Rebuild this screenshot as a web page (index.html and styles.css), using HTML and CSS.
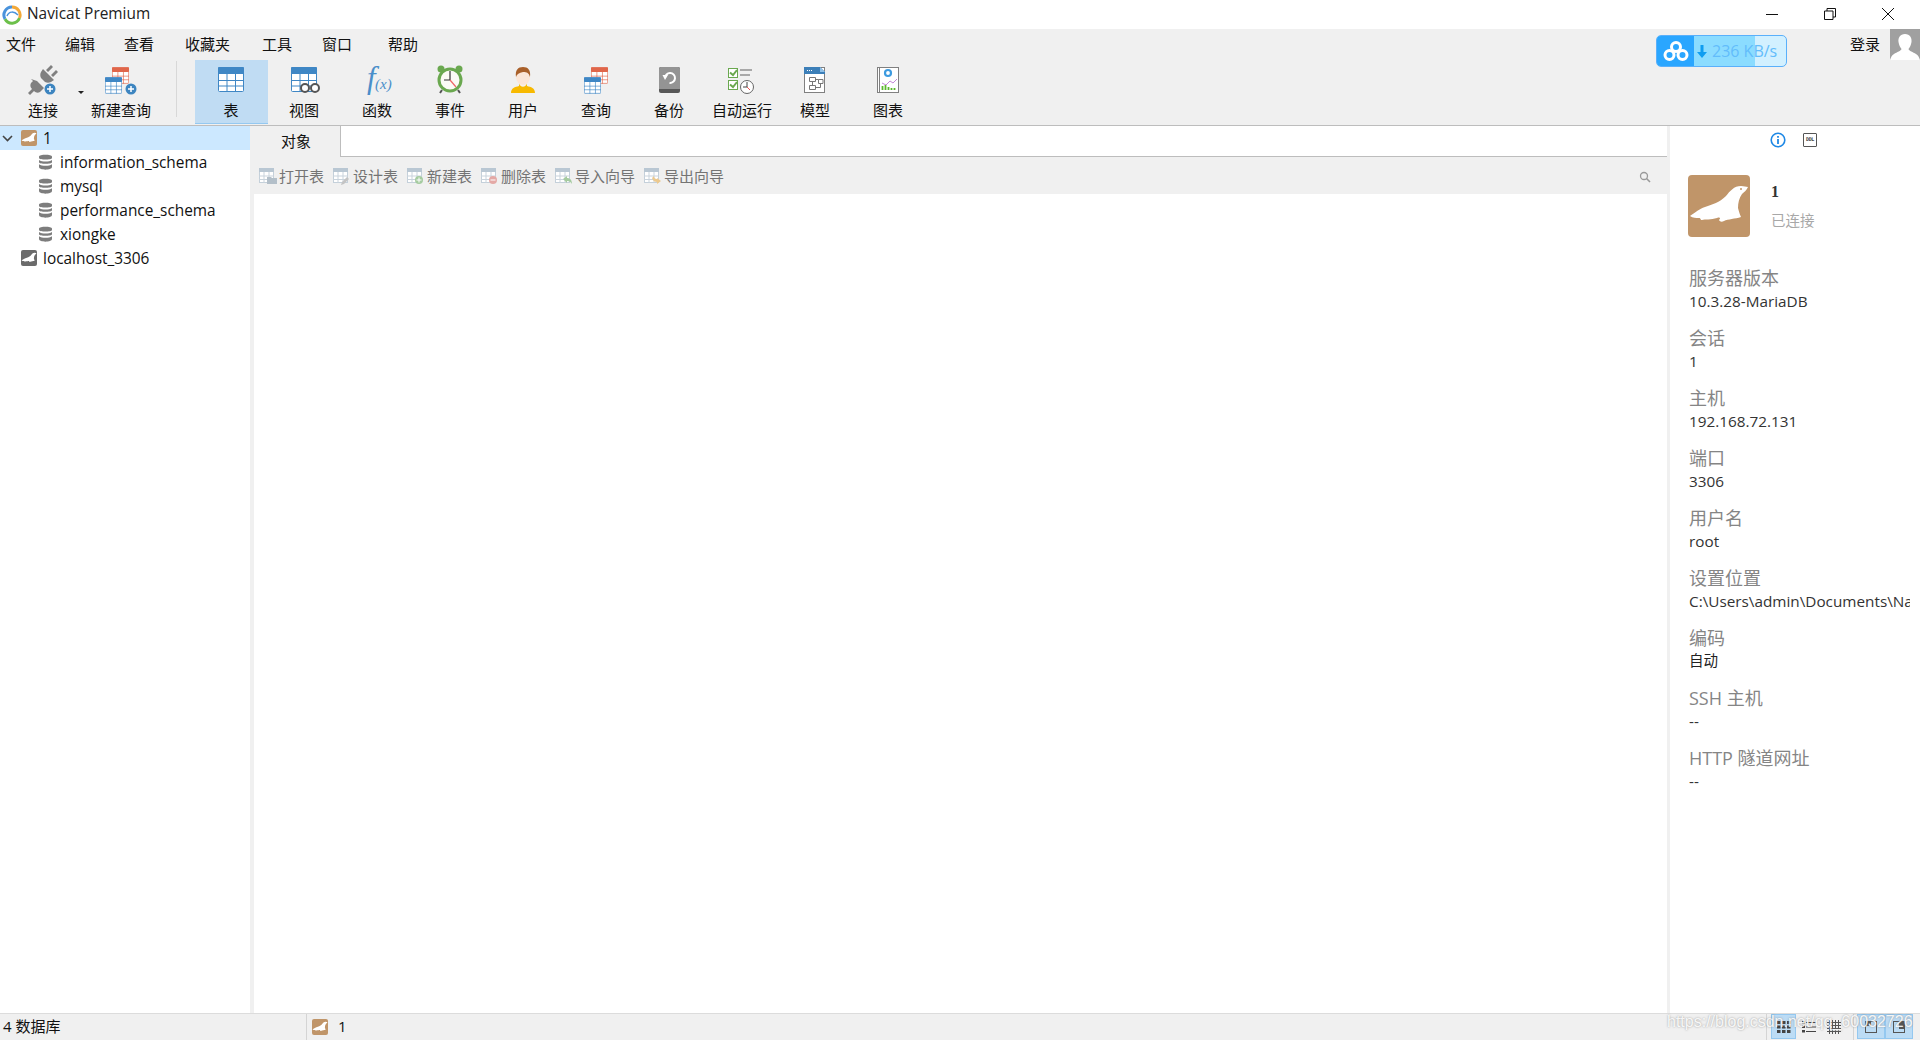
FILE: index.html
```html
<!DOCTYPE html>
<html lang="zh">
<head>
<meta charset="utf-8">
<title>Navicat Premium</title>
<link rel="stylesheet" href="styles.css">
</head>
<body>
<svg class="sprite" xmlns="http://www.w3.org/2000/svg">
  <defs>
    <symbol id="grid" viewBox="0 0 26 25">
      <rect x="0.5" y="0.5" width="25" height="24" rx="1" fill="#fff" stroke="currentColor"/>
      <rect x="0" y="0" width="26" height="7" rx="1" fill="currentColor"/>
      <path d="M0 13.5H26M0 19H26M9 7V25M17.5 7V25" stroke="currentColor" fill="none"/>
    </symbol>
    <symbol id="seal" viewBox="0 0 62 62">
      <path d="M2 41C8 37 11 34 17 32C25 29 31 28 38 21C42 16 46 11 53 11C56 11 58 12 60 12C59 15 56 17 54 19C51 23 50 28 50 33C51 37 52 40 53 42C47 44 40 44 36 46C34 47 32 47 31 45C33 43 32 42 29 43C23 45 17 44 14 45C12 45 13 43 11 43C8 43 5 43 2 41Z" fill="#fff"/>
    </symbol>
    <symbol id="mini" viewBox="0 0 15 15">
      <rect x="0.5" y="0.5" width="14" height="14" fill="#fff" stroke="#c4d0da"/>
      <rect x="0" y="0" width="15" height="4" fill="#b9c7d3"/>
      <path d="M0 8H15M0 11.5H15M5 4V15M10 4V15" stroke="#c9d3dc" fill="none"/>
    </symbol>
    <symbol id="db" viewBox="0 0 15 16">
      <path d="M1 2.5C1 0 14 0 14 2.5V4C14 6 1 6 1 4ZM1 6C4 8 11 8 14 6V8.2C14 10.2 1 10.2 1 8.2ZM1 10.2C4 12.2 11 12.2 14 10.2V13C14 16.5 1 16.5 1 13Z" fill="#7d7d7d"/>
    </symbol>
  </defs>
</svg>

<div class="app">
  <header class="titlebar">
    <svg class="app-logo" width="20" height="20" viewBox="0 0 20 20">
      <path d="M10 2A8 8 0 0 1 17.500 13" fill="none" stroke="#f3a93a" stroke-width="3"/>
      <path d="M17.500 13A8 8 0 0 1 3 14" fill="none" stroke="#6cc04a" stroke-width="3"/>
      <path d="M3 14A8 8 0 0 1 10 2" fill="none" stroke="#4a93dc" stroke-width="3"/>
      <path d="M5 11C7 6 12 6 16 10" fill="none" stroke="#4a93dc" stroke-width="1.500"/>
    </svg>
    <span class="app-name">Navicat Premium</span>
    <div class="win-controls">
      <svg class="win-btn" width="12" height="12" viewBox="0 0 12 12"><path d="M0 6.5H12" stroke="#111"/></svg>
      <svg class="win-btn" width="12" height="12" viewBox="0 0 12 12"><path d="M0.5 3H9V11.5H0.5ZM3 3V0.5H11.5V9H9" fill="none" stroke="#111"/></svg>
      <svg class="win-btn" width="12" height="12" viewBox="0 0 12 12"><path d="M0 0L12 12M12 0L0 12" stroke="#111"/></svg>
    </div>
  </header>

  <nav class="menubar">
    <span class="menu m1">文件</span>
    <span class="menu m2">编辑</span>
    <span class="menu m3">查看</span>
    <span class="menu m4">收藏夹</span>
    <span class="menu m5">工具</span>
    <span class="menu m6">窗口</span>
    <span class="menu m7">帮助</span>
    <div class="speed">
      <span class="speed-icon">
        <svg width="26" height="22" viewBox="0 0 26 22"><g fill="none" stroke="#fff" stroke-width="3"><circle cx="13" cy="7" r="4.5"/><circle cx="6.5" cy="15" r="4.5"/><circle cx="19.5" cy="15" r="4.5"/></g></svg>
      </span>
      <span class="speed-val">
        <svg class="speed-arrow" width="10" height="13" viewBox="0 0 10 13"><path d="M3.500 0H6.500V7H10L5 13L0 7H3.500Z" fill="#0f9df0"/></svg>
        236 KB/s
      </span>
    </div>
    <span class="menu login">登录</span>
    <span class="avatar">
      <svg width="30" height="31" viewBox="0 0 30 31"><path d="M15 5C20 5 22 9 21.500 13C21 16 20 18 18.500 20C19 22 23 23 26 25C28 26 29 28 30 31H0C1 28 2 26 4 25C7 23 11 22 11.500 20C10 18 9 16 8.500 13C8 9 10 5 15 5Z" fill="#fff"/></svg>
    </span>
  </nav>

  <div class="toolbar">
    <div class="tool tool-first">
      <svg class="tool-icon" viewBox="0 0 36 36">
        <g fill="#808080">
          <path d="M12 19L19 26L15 30C13 31 11 31 9 29L5 33L3 31L7 27C5 25 5 23 6 21L8 19L6 17"/>
          <path d="M18 7L29 18L26 20C24 21 22 21 20 20L16 16C15 14 15 12 16 10Z"/>
          <path d="M21 8L26 3L28 5L23 10ZM26 13L31 8L33 10L28 15Z"/>
        </g>
        <circle cx="25" cy="27" r="5.500" fill="#3d85c0"/>
        <path d="M22 27H28M25 24V30" stroke="#fff" stroke-width="1.500"/>
      </svg>
      <span class="tool-label">连接</span>
      <span class="caret"></span>
    </div>
    <div class="tool tool-second">
      <svg class="tool-icon" viewBox="0 0 36 36">
        <use href="#grid" x="9" y="5" width="17" height="17" class="c-red"/>
        <use href="#grid" x="2" y="15" width="17" height="17" class="c-blue"/>
        <circle cx="28" cy="27" r="5.500" fill="#3d85c0"/>
        <path d="M25 27H31M28 24V30" stroke="#fff" stroke-width="1.500"/>
      </svg>
      <span class="tool-label">新建查询</span>
    </div>
    <span class="tool-sep"></span>
    <div class="tool is-active">
      <svg class="tool-icon" viewBox="0 0 36 36"><use href="#grid" x="5" y="5" width="26" height="25" class="c-blue"/></svg>
      <span class="tool-label">表</span>
    </div>
    <div class="tool">
      <svg class="tool-icon" viewBox="0 0 36 36">
        <use href="#grid" x="5" y="5" width="26" height="25" class="c-blue"/>
        <circle cx="19" cy="26" r="4" fill="#fff" stroke="#555" stroke-width="2"/>
        <circle cx="29" cy="26" r="4" fill="#fff" stroke="#555" stroke-width="2"/>
      </svg>
      <span class="tool-label">视图</span>
    </div>
    <div class="tool">
      <svg class="tool-icon fx" viewBox="0 0 36 36">
        <text x="8" y="26" class="fx-f">f</text>
        <text x="16" y="27" class="fx-x">(x)</text>
      </svg>
      <span class="tool-label">函数</span>
    </div>
    <div class="tool">
      <svg class="tool-icon" viewBox="0 0 36 36">
        <circle cx="9" cy="7" r="3.500" fill="#6aa84f"/><circle cx="27" cy="7" r="3.500" fill="#6aa84f"/>
        <path d="M10 28L8 31M26 28L28 31" stroke="#555" stroke-width="2"/>
        <circle cx="18" cy="18" r="11" fill="#fbfbf5" stroke="#6aa84f" stroke-width="3"/>
        <path d="M18 18V9M18 18H12" stroke="#333" stroke-width="1.200"/>
        <path d="M18 18L24 25" stroke="#e66" stroke-width="1.200"/>
      </svg>
      <span class="tool-label">事件</span>
    </div>
    <div class="tool">
      <svg class="tool-icon" viewBox="0 0 36 36">
        <path d="M6 31C6 26 10 25 14 24V20H22V24C26 25 30 26 30 31Z" fill="#f7b900"/>
        <path d="M14 21C15 26 21 26 22 21L24 14H12Z" fill="#f6f0ea"/>
        <ellipse cx="18" cy="15" rx="7" ry="8" fill="#fbe5d6"/>
        <path d="M11 15C10 8 13 5 18 5C23 5 26 8 25 15C24 11 22 10 18 10C14 11 12 12 11 15Z" fill="#a9602a"/>
      </svg>
      <span class="tool-label">用户</span>
    </div>
    <div class="tool">
      <svg class="tool-icon" viewBox="0 0 36 36">
        <use href="#grid" x="13" y="5" width="17" height="17" class="c-red"/>
        <use href="#grid" x="6" y="15" width="17" height="17" class="c-blue"/>
      </svg>
      <span class="tool-label">查询</span>
    </div>
    <div class="tool">
      <svg class="tool-icon" viewBox="0 0 36 36">
        <rect x="8" y="5" width="21" height="26" rx="2" fill="#585858"/>
        <path d="M8 7A2 2 0 0 1 10 5H27A2 2 0 0 1 29 7V27H8Z" fill="#949494"/>
        <path d="M14 16A5 5 0 1 1 18.500 21" fill="none" stroke="#fff" stroke-width="2"/>
        <path d="M11.500 13H17L14 18Z" fill="#fff"/>
      </svg>
      <span class="tool-label">备份</span>
    </div>
    <div class="tool">
      <svg class="tool-icon" viewBox="0 0 36 36">
        <rect x="4.500" y="6.500" width="9" height="9" fill="#fff" stroke="#6aa84f"/>
        <rect x="4.500" y="18.500" width="9" height="9" fill="#fff" stroke="#6aa84f"/>
        <path d="M6 10.500L9 13L13 8M6 22.500L9 25L13 20" fill="none" stroke="#6aa84f" stroke-width="2"/>
        <path d="M16 8H28M16 13H26" stroke="#a8a8a8" stroke-width="2"/>
        <circle cx="23" cy="25" r="6.500" fill="#fff" stroke="#666"/>
        <path d="M23 25V20M23 25H19" stroke="#444"/>
        <path d="M23 25L26 28" stroke="#e55"/>
      </svg>
      <span class="tool-label">自动运行</span>
    </div>
    <div class="tool">
      <svg class="tool-icon" viewBox="0 0 36 36">
        <rect x="7.500" y="5.500" width="20" height="25" fill="#fff" stroke="#808080"/>
        <path d="M7 5H23L28 10V12H7Z" fill="#3c7fb8"/>
        <path d="M23 5L28 10H23Z" fill="#8ec0e8"/>
        <path d="M10 8.500H15" stroke="#fff" stroke-dasharray="1 1"/>
        <path d="M12.500 15.500H18.500V19.500H12.500ZM21.500 17.500H26V21.500H21.500ZM12.500 23.500H18.500V27.500H12.500ZM15.500 19.500V23.500M18.500 17.500H21.500M18.500 25.500H23.500V21.500" fill="none" stroke="#777"/>
      </svg>
      <span class="tool-label">模型</span>
    </div>
    <div class="tool">
      <svg class="tool-icon" viewBox="0 0 36 36">
        <rect x="7.500" y="5.500" width="21" height="25" fill="#fff" stroke="#808080"/>
        <path d="M9.500 5.500V30.500" stroke="#808080"/>
        <circle cx="18" cy="11" r="3" fill="none" stroke="#3d9be0" stroke-width="2.200"/>
        <path d="M12 21L16 23L20 19L23 21L27 17" fill="none" stroke="#c586d8"/>
        <path d="M12.500 28V24M15.500 28V23M18.500 28V25M21.500 28V26M24.500 28V26" stroke="#5cb82d" stroke-width="1.800"/>
      </svg>
      <span class="tool-label">图表</span>
    </div>
  </div>

  <main class="workspace">
    <aside class="sidebar">
      <div class="tree-row is-selected">
        <svg class="chevron" width="11" height="7" viewBox="0 0 11 7"><path d="M1 1L5.500 5.500L10 1" fill="none" stroke="#444" stroke-width="1.600"/></svg>
        <svg class="conn-icon tan" width="16" height="16" viewBox="0 0 62 62"><use href="#seal"/></svg>
        <span class="tree-text">1</span>
      </div>
      <div class="tree-row child"><svg class="db-icon" width="15" height="16"><use href="#db"/></svg><span class="tree-text">information_schema</span></div>
      <div class="tree-row child"><svg class="db-icon" width="15" height="16"><use href="#db"/></svg><span class="tree-text">mysql</span></div>
      <div class="tree-row child"><svg class="db-icon" width="15" height="16"><use href="#db"/></svg><span class="tree-text">performance_schema</span></div>
      <div class="tree-row child"><svg class="db-icon" width="15" height="16"><use href="#db"/></svg><span class="tree-text">xiongke</span></div>
      <div class="tree-row top"><svg class="conn-icon dark" width="16" height="16" viewBox="0 0 62 62"><use href="#seal"/></svg><span class="tree-text">localhost_3306</span></div>
    </aside>

    <section class="center">
      <div class="tabs">
        <span class="tab">对象</span>
        <span class="tab-rest"></span>
      </div>
      <div class="obj-bar">
        <span class="obj-btn"><span class="mini-wrap"><svg width="15" height="15"><use href="#mini"/></svg><svg class="badge" width="10" height="8" viewBox="0 0 10 8"><path d="M0 1H4L5 2H10V8H0Z" fill="#b3bfc9"/></svg></span>打开表</span>
        <span class="obj-btn"><span class="mini-wrap"><svg width="15" height="15"><use href="#mini"/></svg><svg class="badge" width="9" height="9" viewBox="0 0 9 9"><path d="M0 9L1 6L6 1L8 3L3 8Z" fill="#c4c4c4"/></svg></span>设计表</span>
        <span class="obj-btn"><span class="mini-wrap"><svg width="15" height="15"><use href="#mini"/></svg><svg class="badge" width="8" height="8" viewBox="0 0 8 8"><circle cx="4" cy="4" r="4" fill="#a5cba0"/><path d="M1.500 4H6.500M4 1.500V6.500" stroke="#fff"/></svg></span>新建表</span>
        <span class="obj-btn"><span class="mini-wrap"><svg width="15" height="15"><use href="#mini"/></svg><svg class="badge" width="8" height="8" viewBox="0 0 8 8"><circle cx="4" cy="4" r="4" fill="#e4a9a6"/><path d="M1.500 4H6.500" stroke="#fff"/></svg></span>删除表</span>
        <span class="obj-btn"><span class="mini-wrap"><svg width="15" height="15"><use href="#mini"/></svg><svg class="badge" width="9" height="8" viewBox="0 0 9 8"><path d="M0 3L4 0V2C7 2 9 4 9 8C8 6 6 5 4 5V7Z" fill="#a5cba0"/></svg></span>导入向导</span>
        <span class="obj-btn"><span class="mini-wrap"><svg width="15" height="15"><use href="#mini"/></svg><svg class="badge" width="9" height="8" viewBox="0 0 9 8"><path d="M9 5L5 8V6C3 6 1 5 0 2L2 0C2 2 3 3 5 3V2Z" fill="#ecc98f"/></svg></span>导出向导</span>
        <svg class="search" width="12" height="12" viewBox="0 0 12 12"><circle cx="5" cy="5" r="3.500" fill="none" stroke="#999" stroke-width="1.300"/><path d="M7.500 7.500L11 11" stroke="#999" stroke-width="1.600"/></svg>
      </div>
      <div class="canvas"></div>
    </section>

    <aside class="info">
      <div class="info-tabs">
        <svg width="16" height="16" viewBox="0 0 16 16"><circle cx="8" cy="8" r="6.800" fill="#fff" stroke="#1e88e5" stroke-width="1.600"/><path d="M8 7V12M8 4V5.800" stroke="#1e88e5" stroke-width="1.800"/></svg>
        <span class="ddl">DDL</span>
      </div>
      <div class="info-head">
        <svg class="info-logo" width="62" height="62" viewBox="0 0 62 62"><use href="#seal"/><circle cx="53" cy="14" r="1" fill="#c09569"/></svg>
        <div class="info-title">
          <div class="info-name">1</div>
          <div class="info-state">已连接</div>
        </div>
      </div>
      <div class="field"><div class="f-label">服务器版本</div><div class="f-value">10.3.28-MariaDB</div></div>
      <div class="field"><div class="f-label">会话</div><div class="f-value">1</div></div>
      <div class="field"><div class="f-label">主机</div><div class="f-value">192.168.72.131</div></div>
      <div class="field"><div class="f-label">端口</div><div class="f-value">3306</div></div>
      <div class="field"><div class="f-label">用户名</div><div class="f-value">root</div></div>
      <div class="field"><div class="f-label">设置位置</div><div class="f-value">C:\Users\admin\Documents\Navicat\MySQL\Servers\1</div></div>
      <div class="field"><div class="f-label">编码</div><div class="f-value f-cjk">自动</div></div>
      <div class="field"><div class="f-label">SSH 主机</div><div class="f-value">--</div></div>
      <div class="field"><div class="f-label">HTTP 隧道网址</div><div class="f-value">--</div></div>
    </aside>
  </main>

  <footer class="statusbar">
    <span class="st-count">4 数据库</span>
    <span class="st-conn">
      <svg class="conn-icon tan" width="16" height="16" viewBox="0 0 62 62"><use href="#seal"/></svg>
      <span class="st-name">1</span>
    </span>
    <span class="st-views">
      <span class="st-btn on"><svg width="14" height="12" viewBox="0 0 14 12"><path d="M0 0H3.500V3H0ZM5 0H8.500V3H5ZM10 0H13.500V3H10ZM0 4.500H3.500V7.500H0ZM5 4.500H8.500V7.500H5ZM10 4.500H13.500V7.500H10ZM0 9H3.500V12H0ZM5 9H8.500V12H5ZM10 9H13.500V12H10Z" fill="#444"/></svg></span>
      <span class="st-btn"><svg width="14" height="12" viewBox="0 0 14 12"><path d="M0 0H3V2.500H0ZM0 4.500H3V7H0ZM0 9H3V11.500H0Z" fill="#444"/><path d="M4 1.500H14M4 6H14M4 10.500H14" stroke="#444"/></svg></span>
      <span class="st-btn"><svg width="14" height="14" viewBox="0 0 14 14"><path d="M0 2.500H14M0 5.500H14M0 8.500H14M0 11.500H14M2.500 0V14M5.500 0V14M8.500 0V14M11.500 0V14" stroke="#555"/></svg></span>
    </span>
    <span class="st-panes">
      <span class="st-btn on wide"><svg width="12" height="12" viewBox="0 0 12 12"><rect x="0.500" y="0.500" width="11" height="11" fill="none" stroke="#555"/><rect x="1" y="1" width="5" height="4" fill="#555"/></svg></span>
      <span class="st-btn on wide"><svg width="12" height="12" viewBox="0 0 12 12"><rect x="0.500" y="0.500" width="11" height="11" fill="none" stroke="#555"/><rect x="6" y="1" width="5" height="7" fill="#555"/></svg></span>
    </span>
    <span class="watermark">https://blog.csdn.net/qq_60032726</span>
  </footer>
</div>
</body>
</html>
```

FILE: styles.css
```css
* { box-sizing: border-box; }
html, body { margin: 0; height: 100%; overflow: hidden; }
body {
  font-family: "Open Sans", "Noto Sans CJK SC", sans-serif;
  font-size: 15px;
  color: #111;
  background: #fff;
}
.sprite { display: none; }
.app { display: flex; flex-direction: column; height: 1040px; }

/* title bar */
.titlebar { height: 29px; flex: none; display: flex; align-items: center; padding: 0 0 2px 2px; background: #fff; }
.app-logo { flex: none; margin-top: 2px; }
.app-name { margin-left: 5px; font-size: 15.400px; color: #222; }
.win-controls { margin-left: auto; display: flex; gap: 46px; padding-right: 26px; }
.win-btn { display: block; }

/* menu */
.menubar { height: 31px; flex: none; display: flex; align-items: flex-start; background: #f0f0f0; position: relative; font-family: "Noto Sans CJK SC", sans-serif; }
.menu { line-height: 29px; }
.m1 { margin-left: 6px; }
.m2 { margin-left: 29px; }
.m3 { margin-left: 29px; }
.m4 { margin-left: 31px; }
.m5 { margin-left: 32px; }
.m6 { margin-left: 30px; }
.m7 { margin-left: 36px; }
.speed { margin-left: auto; margin-top: 6px; width: 131px; height: 32px; border: 1.500px solid #5ab0fb; border-radius: 5px; display: flex; overflow: hidden; background: linear-gradient(90deg, #8bdcff 0 98px, #d2f0ff 98px); }
.speed-icon { width: 37px; flex: none; background: #2aa6ff; display: flex; align-items: center; justify-content: center; }
.speed-val { display: flex; align-items: center; font-family: "Open Sans", sans-serif; font-size: 16px; color: #62bcfb; white-space: nowrap; padding-left: 3px; }
.speed-arrow { margin-right: 5px; flex: none; }
.login { margin-left: 63px; width: 40px; }
.avatar { width: 30px; height: 31px; background: #a0a0a0; flex: none; display: block; }
.avatar svg { display: block; }

/* toolbar */
.toolbar { height: 66px; flex: none; display: flex; padding-left: 7px; background: #f0f0f0; border-bottom: 1px solid #bdbdbd; font-family: "Noto Sans CJK SC", sans-serif; }
.tool { width: 73px; height: 64px; flex: none; display: flex; flex-direction: column; align-items: center; position: relative; padding-right: 1px; }
.tool-second { margin-left: 5px; }
.tool-icon { width: 36px; height: 36px; margin-top: 2px; flex: none; }
.tool-icon.fx { overflow: visible; }
.tool-label { line-height: 24px; white-space: nowrap; }
.tool-sep { width: 1px; height: 56px; margin: 1px 18px 0 18px; background: #d8d8d8; flex: none; }
.tool.is-active { background: #c0dcf3; border-bottom: 1px solid #94c8f0; }
.caret { position: absolute; right: -4px; top: 31px; width: 0; height: 0; border-left: 3px solid transparent; border-right: 3px solid transparent; border-top: 3px solid #222; }
.c-red { color: #e0664a; }
.c-blue { color: #3f87c5; }
.fx-f { font-family: "Liberation Serif", serif; font-style: italic; font-size: 31px; fill: #4a8ec9; }
.fx-x { font-family: "Liberation Serif", serif; font-style: italic; font-size: 15px; fill: #4a8ec9; }

/* workspace */
.workspace { flex: 1; display: flex; min-height: 0; }
.sidebar { width: 250px; flex: none; background: #fff; }
.tree-row { height: 24px; display: flex; align-items: center; white-space: nowrap; }
.tree-row.is-selected { background: #cce8ff; }
.chevron { margin-left: 2px; flex: none; }
.is-selected .conn-icon { margin-left: 8px; }
.top .conn-icon { margin-left: 21px; }
.conn-icon { flex: none; border-radius: 2px; }
.tan { background: #c09569; }
.dark { background: #6b6b6b; }
.tree-text { margin-left: 6px; font-size: 15.400px; }
.child { padding-left: 38px; }
.db-icon { flex: none; }
.child .tree-text { margin-left: 7px; }

.center { flex: 1; min-width: 0; display: flex; flex-direction: column; }
.tabs { height: 31px; flex: none; display: flex; }
.tab { width: 91px; flex: none; background: #f0f0f0; border-right: 1px solid #bdbdbd; text-align: center; line-height: 30px; font-family: "Noto Sans CJK SC", sans-serif; padding-left: 2px; }
.tab-rest { flex: 1; border-bottom: 1px solid #bdbdbd; }
.obj-bar { height: 37px; flex: none; display: flex; align-items: center; padding-left: 9px; background: #f0f0f0; gap: 9px; position: relative; font-family: "Noto Sans CJK SC", sans-serif; color: #747474; }
.obj-btn { display: flex; align-items: center; white-space: nowrap; line-height: 20px; }
.mini-wrap { width: 20px; height: 16px; flex: none; position: relative; display: block; }
.mini-wrap > svg:first-child { display: block; }
.badge { position: absolute; left: 8px; top: 8px; }
.search { margin-left: auto; margin-right: 16px; margin-top: 2px; }
.canvas { flex: 1; background: #fff; border-left: 4px solid #f0f0f0; }

.info { width: 253px; flex: none; background: #fff; border-left: 3px solid #f0f0f0; padding-left: 19px; overflow: hidden; }
.info-tabs { height: 24px; display: flex; align-items: center; gap: 17px; margin-left: 81px; margin-top: 2px; }
.ddl { width: 14px; height: 14px; border: 1.500px solid #555; border-radius: 1px; font-size: 5px; font-weight: 700; line-height: 11px; text-align: center; color: #444; font-family: "DejaVu Sans Mono", monospace; overflow: hidden; white-space: nowrap; letter-spacing: -0.3px; }
.info-head { display: flex; margin-top: 23px; margin-left: -1px; }
.info-logo { background: #c09569; border-radius: 4px; flex: none; }
.info-title { margin-left: 21px; }
.info-name { font-family: "Liberation Serif", serif; font-weight: 700; font-size: 16px; line-height: 18px; margin-top: 8px; color: #333; }
.info-state { font-family: "Noto Sans CJK SC", sans-serif; font-size: 14.500px; color: #a8a8a8; line-height: 20px; margin-top: 9px; }
.field { height: 60px; overflow: hidden; }
.info-head + .field { margin-top: 27px; }
.f-label { font-size: 18px; line-height: 28px; color: #858585; white-space: nowrap; font-family: "Open Sans", "Noto Sans CJK SC", sans-serif; }
.f-value { font-size: 15.300px; line-height: 18px; color: #333; white-space: nowrap; overflow: hidden; margin-right: 10px; }
.f-cjk { font-size: 14.500px; color: #222; }

/* status bar */
.statusbar { height: 27px; flex: none; display: flex; align-items: center; background: #f0f0f0; border-top: 1px solid #dcdcdc; position: relative; font-size: 15px; }
.st-count { width: 306px; padding: 0 0 3px 3px; flex: none; white-space: nowrap; }
.st-conn { display: flex; align-items: center; height: 26px; border-left: 1px solid #d4d4d4; padding-left: 5px; }
.st-name { margin: 0 0 3px 10px; }
.st-views { margin-left: auto; display: flex; border-left: 1px solid #d4d4d4; padding-left: 4px; height: 26px; gap: 0; }
.st-panes { display: flex; border-left: 1px solid #d4d4d4; margin-left: 7px; padding-left: 3px; height: 26px; margin-right: 7px; }
.st-btn { width: 25px; height: 25px; display: flex; align-items: center; justify-content: center; }
.st-btn.on { background: #bcdcf5; border: 1px solid #94c8f0; }
.st-btn.wide { width: 28px; }
.watermark { position: absolute; left: 1667px; top: -1px; line-height: 18px; font-family: "Liberation Sans", sans-serif; font-size: 16px; color: rgba(255,255,255,0.9); text-shadow: 0 0 2px rgba(110,110,110,0.7); white-space: nowrap; pointer-events: none; }
```
